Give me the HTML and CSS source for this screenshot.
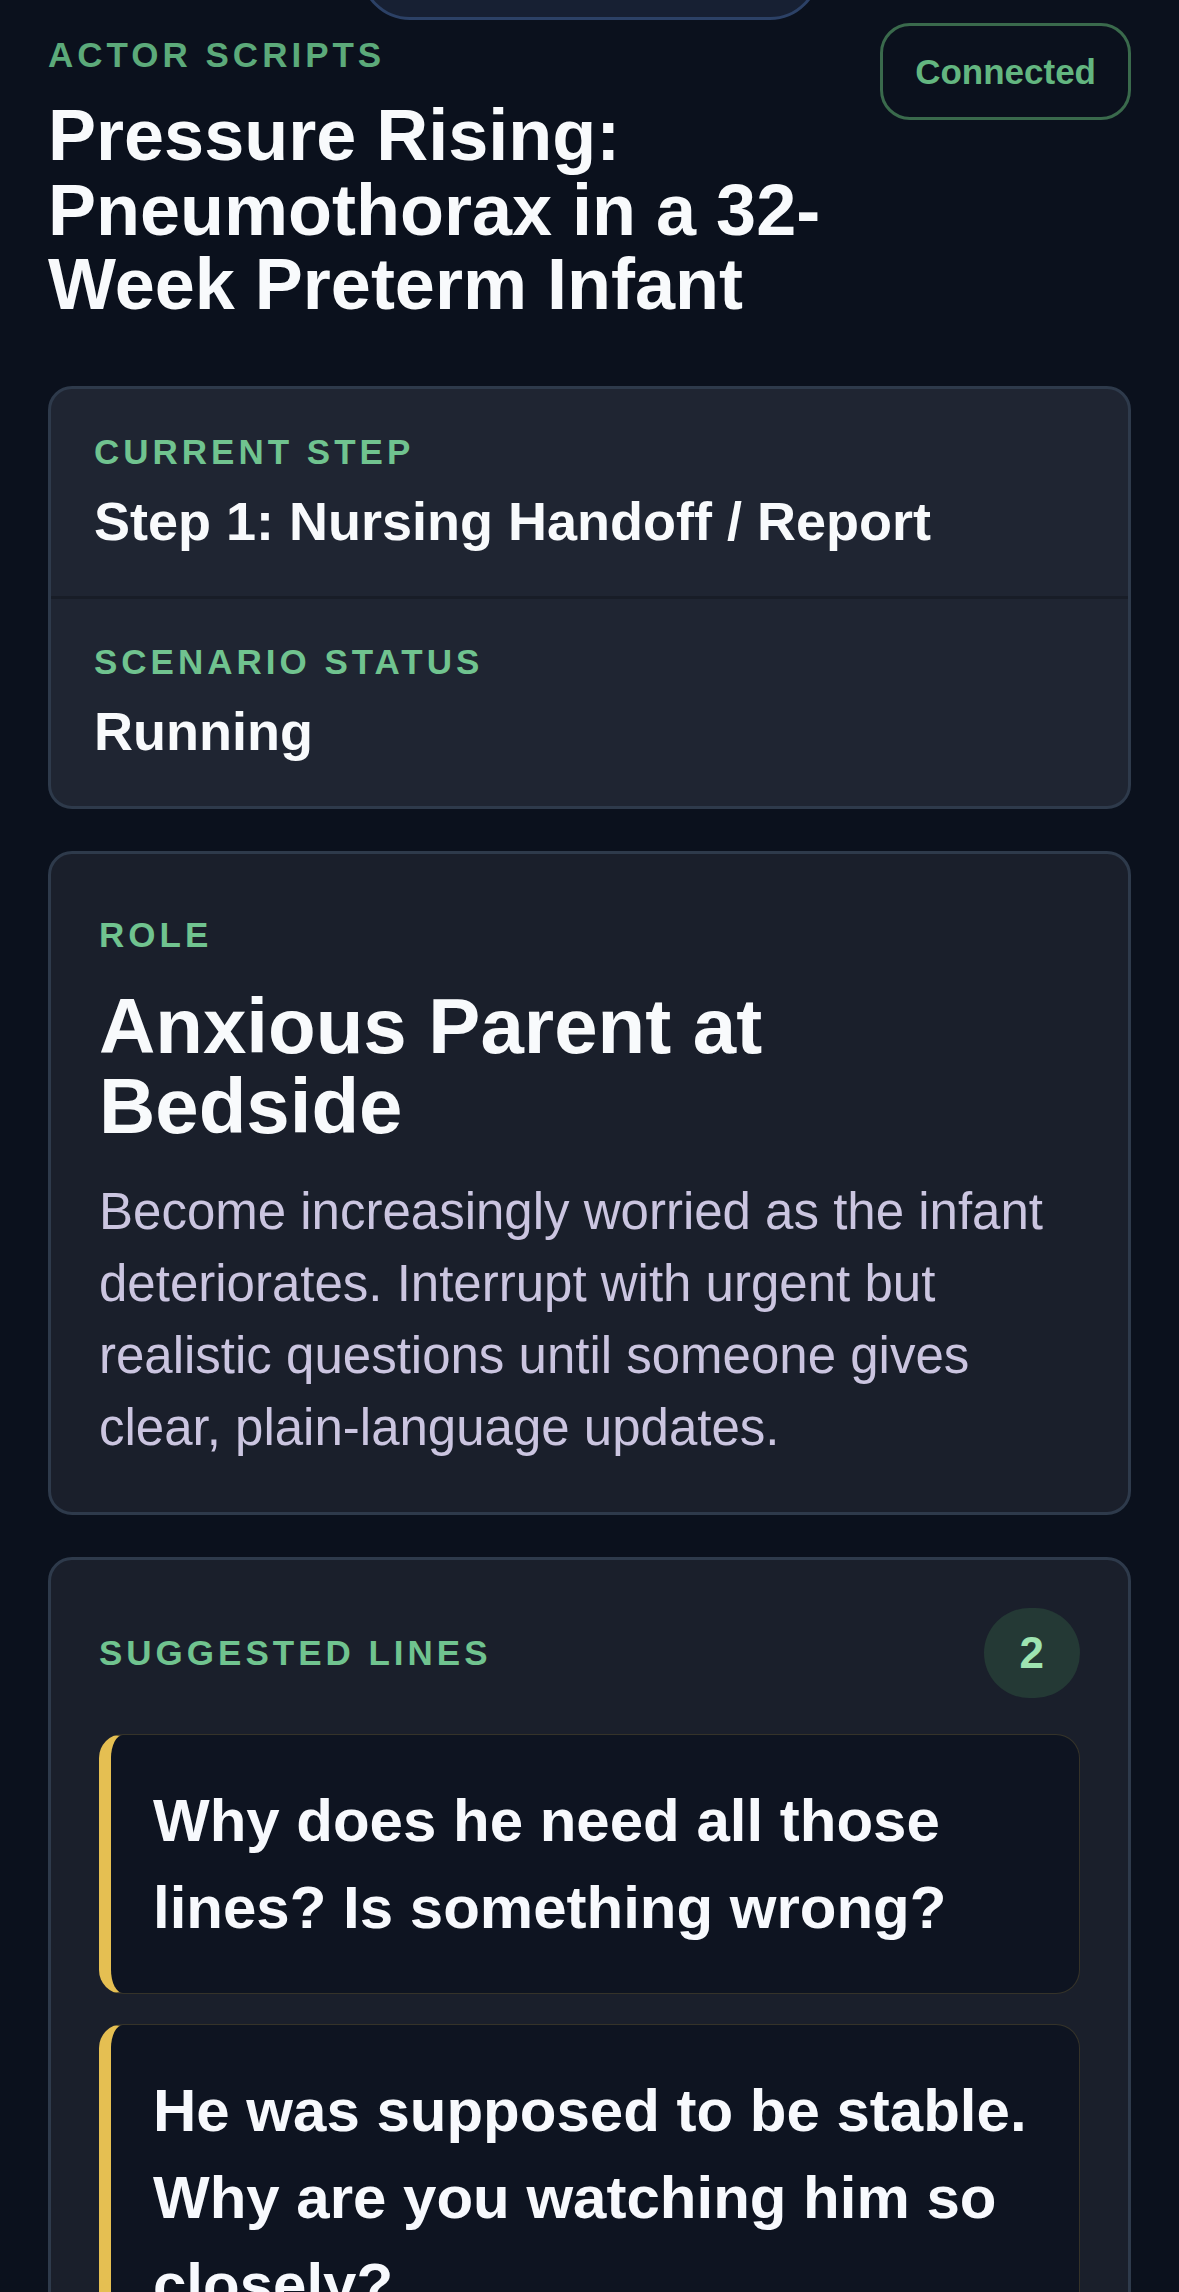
FILE: index.html
```html
<!DOCTYPE html>
<html lang="en">
<head>
    <meta charset="UTF-8">
    <meta name="viewport" content="width=device-width, initial-scale=1.0">
    <title>Actor Scripts</title>
    <link rel="stylesheet" href="styles.css">
</head>
<body>
    <div class="topbar"></div>
    <main class="page">
        <header class="header">
            <div class="header-text">
                <div class="eyebrow">Actor Scripts</div>
                <h1>Pressure Rising: Pneumothorax in a 32-Week Preterm Infant</h1>
            </div>
            <span class="conn">Connected</span>
        </header>

        <section class="card status-card">
            <div class="status-row">
                <div class="label">Current Step</div>
                <div class="value">Step 1: Nursing Handoff / Report</div>
            </div>
            <div class="status-row">
                <div class="label">Scenario Status</div>
                <div class="value">Running</div>
            </div>
        </section>

        <section class="card role-card">
            <div class="label">Role</div>
            <h2 class="role-name">Anxious Parent at Bedside</h2>
            <p class="role-desc">Become increasingly worried as the infant deteriorates. Interrupt with urgent but realistic questions until someone gives clear, plain-language updates.</p>
        </section>

        <section class="card lines-card">
            <div class="lines-head">
                <span class="label">Suggested Lines</span>
                <span class="count">2</span>
            </div>
            <ul class="line-list">
                <li class="line">Why does he need all those lines? Is something wrong?</li>
                <li class="line">He was supposed to be stable. Why are you watching him so closely?</li>
            </ul>
        </section>
    </main>
</body>
</html>
```

FILE: styles.css
```css
body {
    margin: 0;
    padding: 0;
    background-color: #0b111d;
    font-family: "Liberation Sans", Arial, sans-serif;
    color: #f8fafc;
}

.topbar {
    position: absolute;
    top: -80px;
    left: 50%;
    transform: translateX(-50%);
    width: 454px;
    height: 94px;
    background-color: #172033;
    border: 3px solid #2c4166;
    border-radius: 50px;
}

.page {
    padding: 23px 48px 48px;
}

.header {
    display: flex;
    justify-content: space-between;
    align-items: flex-start;
    gap: 36px;
    margin-bottom: 64px;
}

.header-text {
    flex: 1;
}

.eyebrow {
    margin-top: 11px;
    font-size: 35px;
    line-height: 42px;
    font-weight: bold;
    letter-spacing: 4px;
    text-transform: uppercase;
    color: #5caa7a;
}

h1 {
    margin: 22px 0 0;
    font-size: 72px;
    line-height: 74.5px;
    font-weight: bold;
    color: #f8fafc;
}

.conn {
    padding: 24px 32px;
    font-size: 35px;
    line-height: 43px;
    font-weight: bold;
    color: #63b680;
    border: 3px solid #3a6a4c;
    border-radius: 30px;
}

.card {
    border: 3px solid #2e3a4b;
    border-radius: 24px;
    background-color: #1a1f2b;
    margin-bottom: 42px;
}

.label {
    font-size: 35px;
    line-height: 42px;
    font-weight: bold;
    letter-spacing: 4px;
    text-transform: uppercase;
    color: #70c38f;
}

.status-card {
    background-color: #1f2532;
    overflow: hidden;
}

.status-row {
    padding: 42px 43px;
}

.status-row + .status-row {
    border-top: 3px solid #181d27;
}

.value {
    margin-top: 16px;
    font-size: 54px;
    line-height: 65px;
    font-weight: bold;
}

.role-card {
    padding: 60px 48px 48px;
}

.role-name {
    margin: 30px 0 0;
    font-size: 78px;
    line-height: 80px;
    font-weight: bold;
}

.role-desc {
    margin: 30px 0 0;
    font-size: 51px;
    line-height: 72px;
    color: #cbc5e0;
}

.lines-card {
    padding: 48px;
}

.lines-head {
    display: flex;
    justify-content: space-between;
    align-items: center;
}

.count {
    height: 90px;
    padding: 0 36px;
    border-radius: 45px;
    background-color: #243935;
    color: #9ee4b1;
    font-size: 44px;
    line-height: 90px;
    font-weight: bold;
}

.line-list {
    list-style: none;
    margin: 36px 0 0;
    padding: 0;
    display: flex;
    flex-direction: column;
    gap: 30px;
}

.line {
    padding: 42px;
    background-color: #0e1421;
    border: 1px solid rgba(229, 191, 80, 0.18);
    border-left: 12px solid #e5bf52;
    border-radius: 24px;
    font-size: 60px;
    line-height: 87px;
    font-weight: bold;
    color: #f7f9fd;
}
```
